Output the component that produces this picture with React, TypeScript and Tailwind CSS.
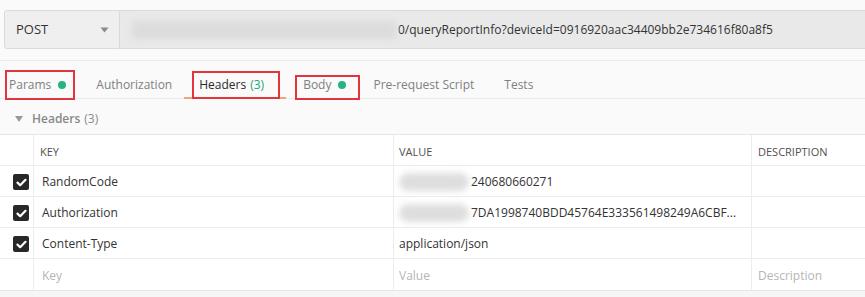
const font = { fontFamily: '"Open Sans", "Liberation Sans", sans-serif' };

function Dot() {
  return <span className="ml-[7px] inline-block h-[8px] w-[8px] rounded-full bg-[#26b47f]" />;
}

function Marked({ children, box, className = "" }: { children: React.ReactNode; box: string; className?: string }) {
  return (
    <span className={`relative flex items-center ${className}`}>
      {children}
      <span className={`pointer-events-none absolute border-2 border-[#e2343d] ${box}`} />
    </span>
  );
}

function Check() {
  return (
    <span className="flex h-[16px] w-[16px] items-center justify-center rounded-[2px] bg-[#282828]">
      <svg width="11" height="9" viewBox="0 0 11 9">
        <path d="M1.5 4.6 L4.2 7.2 L9.5 1.8" fill="none" stroke="#fff" strokeWidth="2.2" strokeLinecap="round" strokeLinejoin="round" />
      </svg>
    </span>
  );
}

function Blur({ w }: { w: string }) {
  return <span className={`mr-[2px] inline-block h-[18px] rounded-full bg-[#dedede] blur-[3px] ${w}`} />;
}

const rows = [
  { key: "RandomCode", value: "240680660271", blur: true },
  { key: "Authorization", value: "7DA1998740BDD45764E333561498249A6CBF...", blur: true },
  { key: "Content-Type", value: "application/json", blur: false },
];

export default function App() {
  return (
    <div className="h-[297px] w-[865px] overflow-hidden bg-[#fafafa] text-[12px] text-[#333]" style={font}>
      {/* request bar */}
      <div className="mt-[10px] flex h-[39px] pl-[4px]">
        <div className="flex w-[116px] items-center justify-between rounded-l-[3px] border border-[#dadada] bg-[#efefef] pl-[11px] pr-[10px] text-[13px] text-[#333]">
          POST
          <svg width="9" height="6" viewBox="0 0 9 6"><path d="M0.5 0.5 H8.5 L4.5 5.5 Z" fill="#8a8a8a" /></svg>
        </div>
        <div className="flex flex-1 items-center border-y border-[#dadada] bg-[#e9e9e9] pl-[12px] text-[12px] text-[#333]">
          <span className="mr-[2px] inline-block h-[18px] w-[264px] rounded-[4px] bg-[#dcdcdc] blur-[3px]" />
          0/queryReportInfo?deviceId=0916920aac34409bb2e734616f80a8f5
        </div>
      </div>

      {/* tabs */}
      <div className="mt-[11px] flex h-[39px] items-center gap-[30px] border-y border-[#ececec] pl-[9px] pt-[10px] text-[#808080]">
        <Marked box="-left-[4px] -right-[9px] -top-[6px] -bottom-[6px]">
          Params<Dot />
        </Marked>
        <span>Authorization</span>
        <span className="relative -ml-[3px] flex items-center text-[#282828]">
          Headers <span className="ml-[4px] text-[#26a37a]">(3)</span>
          <span className="absolute -left-[15px] -right-[22px] -bottom-[5px] h-[2px] bg-[#f3a47c]" />
          <span className="pointer-events-none absolute -left-[7px] -right-[16px] -top-[5px] -bottom-[5px] border-2 border-[#e2343d]" />
        </span>
        <Marked className="ml-[9px]" box="-left-[8px] -right-[14px] -top-[1px] -bottom-[6px]">
          Body<Dot />
        </Marked>
        <span className="-ml-[3px]">Pre-request Script</span>
        <span>Tests</span>
      </div>

      {/* section title */}
      <div className="flex h-[35px] items-center pl-[15px] pt-[4px] text-[#8a8a8a]">
        <svg width="8" height="6" viewBox="0 0 8 6" className="mr-[9px]"><path d="M0 0 H8 L4 6 Z" fill="#9a9a9a" /></svg>
        <span className="font-semibold text-[#888]">Headers</span>
        <span className="ml-[4px]">(3)</span>
      </div>

      {/* table */}
      <div className="border-t border-[#e6e6e6] bg-white">
        <div className="grid h-[31px] grid-cols-[34px_360px_358px_1fr] border-b border-[#ececec] text-[11px] text-[#505050]">
          <div className="border-r border-[#ececec]" />
          <div className="flex items-center border-r border-[#ececec] pl-[6px] pt-[4px]">KEY</div>
          <div className="flex items-center border-r border-[#ececec] pl-[5px] pt-[4px]">VALUE</div>
          <div className="flex items-center pl-[6px] pt-[4px]">DESCRIPTION</div>
        </div>
        {rows.map((r) => (
          <div key={r.key} className="grid h-[31px] grid-cols-[34px_360px_358px_1fr] border-b border-[#ececec]">
            <div className="flex items-center justify-end border-r border-[#ececec] pr-[4px] pt-[2px]">
              <Check />
            </div>
            <div className="flex items-center border-r border-[#ececec] pl-[8px] pt-[2px]">{r.key}</div>
            <div className="flex items-center whitespace-nowrap border-r border-[#ececec] pl-[5px] pt-[2px]">
              {r.blur && <Blur w="w-[70px]" />}
              {r.value}
            </div>
            <div />
          </div>
        ))}
        <div className="grid h-[31px] grid-cols-[34px_360px_358px_1fr] text-[#b5b5b5]">
          <div className="border-r border-[#ececec]" />
          <div className="flex items-center border-r border-[#ececec] pl-[8px] pt-[2px]">Key</div>
          <div className="flex items-center border-r border-[#ececec] pl-[5px] pt-[2px]">Value</div>
          <div className="flex items-center pl-[6px] pt-[2px]">Description</div>
        </div>
      </div>
      <div className="h-[10px] border-t border-[#e6e6e6] bg-[#f6f6f6]" />
    </div>
  );
}
